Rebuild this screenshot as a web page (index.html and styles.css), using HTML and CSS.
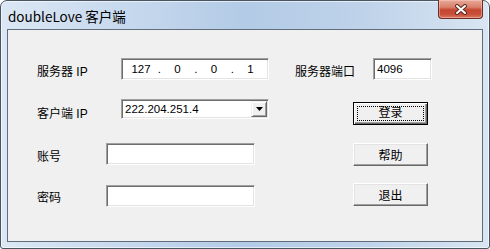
FILE: index.html
```html
<!DOCTYPE html>
<html lang="zh-CN">
<head>
  <meta charset="UTF-8" />
  <title>doubleLove 客户端</title>
  <link rel="stylesheet" href="styles.css">
</head>
<body>

  <div class="window">
    <div class="titlebar">
      <span class="title">doubleLove 客户端</span>
      <button class="close" title="关闭">
        <svg width="14" height="11" viewBox="0 0 14 11">
          <path d="M3 2 L11 9 M11 2 L3 9" stroke="#5a2a22" stroke-width="4" stroke-linecap="round" />
          <path d="M3 2 L11 9 M11 2 L3 9" stroke="#ffffff" stroke-width="2" stroke-linecap="round" />
        </svg>
      </button>
    </div>

    <div class="client">
      <div class="row">
        <label class="label ip-label">服务器 IP</label>
        <div class="field ip-box">
          <span class="seg">127</span><span class="dot">.</span>
          <span class="seg">0</span><span class="dot">.</span>
          <span class="seg">0</span><span class="dot">.</span>
          <span class="seg">1</span>
        </div>
        <label class="label port-label">服务器端口</label>
        <div class="field port-box">4096</div>
      </div>

      <div class="row row-combo">
        <label class="label ip-label">客户端 IP</label>
        <div class="field combo">
          <span class="combo-text">222.204.251.4</span>
          <span class="combo-arrow">
            <svg width="7" height="4" viewBox="0 0 7 4"><path d="M0 0 H7 L3.5 4 Z" fill="#000" /></svg>
          </span>
        </div>
        <button class="btn btn-default push-login"><span class="focus">登录</span></button>
      </div>

      <div class="row row-user">
        <label class="label user-label">账号</label>
        <div class="field text-box"></div>
        <button class="btn push">帮助</button>
      </div>

      <div class="row row-pass">
        <label class="label user-label">密码</label>
        <div class="field text-box"></div>
        <button class="btn push">退出</button>
      </div>
    </div>
  </div>

</body>
</html>
```

FILE: styles.css
```css
* {
  box-sizing: border-box;
}

body {
  margin: 0;
  padding: 0;
  background: #ffffff;
  font-family: "Liberation Sans", "Noto Sans CJK SC", sans-serif;
  font-size: 12px;
  color: #000;
}

.window {
  width: 490px;
  height: 249px;
  border: 1px solid #4a5562;
  border-radius: 7px 7px 3px 3px;
  background: linear-gradient(90deg, #dbe7f4 0%, #c7d9ee 25%, #b3cbe6 50%, #bfd3ea 75%, #d9e5f2 100%);
  padding: 0 6px 6px 6px;
  display: flex;
  flex-direction: column;
  box-shadow: inset 0 0 0 1px rgba(255, 255, 255, 0.6);
}

.titlebar {
  height: 28px;
  display: flex;
  align-items: center;
  padding-left: 1px;
}

.title {
  font-family: "Noto Sans CJK SC", sans-serif;
  font-size: 13.5px;
  color: #000;
  margin-top: 1px;
}

.close {
  margin-left: auto;
  margin-right: 0;
  align-self: flex-start;
  margin-top: -1px;
  width: 45px;
  height: 19px;
  padding: 0;
  border: 1px solid #6b2e25;
  border-top: none;
  border-radius: 0 0 4px 4px;
  background: linear-gradient(180deg, #e9aa9a 0%, #d97f6a 40%, #c54631 55%, #c9503a 80%, #d97a60 100%);
  box-shadow: inset 0 0 0 1px rgba(255, 210, 200, 0.45);
  display: flex;
  align-items: center;
  justify-content: center;
}

.client {
  flex: 1;
  border: 1px solid #5f6d7c;
  background: #f0f0f0;
  padding: 28px 0 0 29px;
}

.row {
  display: flex;
  align-items: center;
  height: 22px;
}

.label {
  padding-top: 2px;
  white-space: nowrap;
}

.ip-label {
  width: 84px;
}

.user-label {
  width: 69px;
}

.port-label {
  width: 78px;
  margin-left: 26px;
}

.field {
  height: 22px;
  background: #ffffff;
  border: 1px solid;
  border-color: #a0a0a0 #ffffff #ffffff #a0a0a0;
  box-shadow: inset 1px 1px 0 #6e6e6e, inset -1px -1px 0 #e3e3e3;
  font-size: 11.5px;
}

.ip-box {
  width: 148px;
  display: flex;
  align-items: center;
  padding-left: 4px;
}

.seg {
  width: 30px;
  text-align: center;
}

.dot {
  width: 6.5px;
  text-align: center;
}

.port-box {
  width: 59px;
  display: flex;
  align-items: center;
  padding-left: 3px;
}

.row-combo {
  margin-top: 19px;
  height: 26px;
  align-items: flex-start;
}

.row-combo .label {
  align-self: center;
  margin-top: -2px;
}

.combo {
  width: 148px;
  height: 20px;
  display: flex;
  align-items: center;
  padding-left: 3px;
}

.combo-text {
  flex: 1;
}

.combo-arrow {
  width: 16px;
  height: 16px;
  margin-right: 1px;
  display: flex;
  align-items: center;
  justify-content: center;
  background: #f0f0f0;
  border: 1px solid;
  border-color: #f0f0f0 #696969 #696969 #f0f0f0;
  box-shadow: inset 1px 1px 0 #ffffff, inset -1px -1px 0 #a0a0a0;
}

.btn {
  width: 75px;
  height: 23px;
  padding: 0;
  font-family: "Liberation Sans", "Noto Sans CJK SC", sans-serif;
  font-size: 12px;
  color: #000;
  background: #f0f0f0;
  border: 1px solid;
  border-color: #ffffff #696969 #696969 #ffffff;
  box-shadow: inset -1px -1px 0 #a0a0a0, inset 1px 1px 0 #e3e3e3;
}

.push-login {
  margin-left: 84px;
  margin-top: 3px;
}

.btn-default {
  border: 1px solid #000;
  box-shadow: inset 1px 1px 0 #ffffff, inset -1px -1px 0 #696969, inset -2px -2px 0 #a0a0a0;
  padding: 3px;
}

.focus {
  display: block;
  height: 100%;
  border: 1px dotted #000;
  line-height: 13px;
}

.row-user {
  margin-top: 18px;
  height: 23px;
}

.row-user .text-box {
  align-self: flex-start;
}

.text-box {
  width: 149px;
}

.push {
  margin-left: 98px;
}

.row-pass {
  margin-top: 17px;
  height: 24px;
}

.row-pass .text-box {
  align-self: flex-end;
}

.row-pass .push {
  align-self: flex-start;
}
```
